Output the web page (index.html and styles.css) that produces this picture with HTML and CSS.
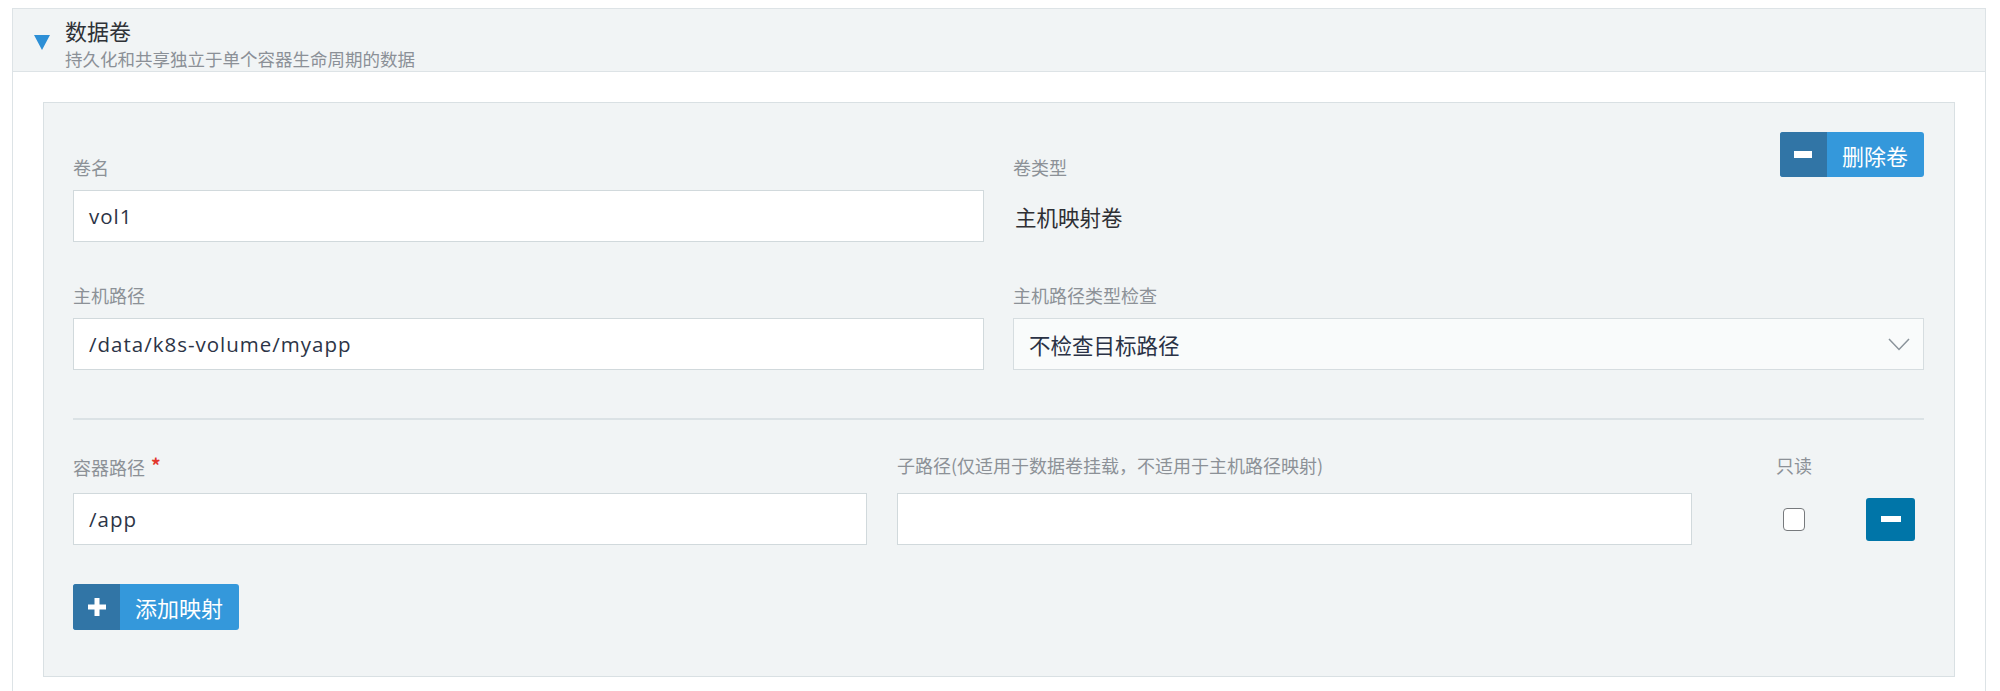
FILE: index.html
```html
<!DOCTYPE html>
<html lang="zh-CN">
<head>
<meta charset="utf-8">
<title>数据卷</title>
<link rel="stylesheet" href="styles.css">
</head>
<body>
<section class="section">
  <header class="section-head">
    <span class="caret"></span>
    <div class="head-text">
      <div class="head-title">数据卷</div>
      <div class="head-sub">持久化和共享独立于单个容器生命周期的数据</div>
    </div>
  </header>
  <div class="section-body">
    <div class="volume-box">
      <div class="grid-two">
        <label class="lbl lbl-end">卷名</label>
        <div class="lbl-row">
          <label class="lbl">卷类型</label>
          <button class="btn btn-remove" type="button">
            <span class="btn-icon"><span class="icon-minus"></span></span>
            <span class="btn-text">删除卷</span>
          </button>
        </div>
        <div class="input"><span class="val">vol1</span></div>
        <div class="static">主机映射卷</div>
        <label class="lbl lbl-gap">主机路径</label>
        <label class="lbl lbl-gap">主机路径类型检查</label>
        <div class="input"><span class="val">/data/k8s-volume/myapp</span></div>
        <div class="select">
          <span class="sel-text">不检查目标路径</span>
          <svg class="chev" width="22" height="13" viewBox="0 0 22 13"><path d="M1 1 L11 11.5 L21 1" fill="none" stroke="#8a939a" stroke-width="1.5"/></svg>
        </div>
      </div>
      <hr class="divider">
      <div class="grid-map">
        <label class="lbl">容器路径 <span class="req">*</span></label>
        <label class="lbl">子路径(仅适用于数据卷挂载，不适用于主机路径映射)</label>
        <label class="lbl lbl-center">只读</label>
        <span></span>
        <div class="input"><span class="val">/app</span></div>
        <div class="input"></div>
        <div class="check-cell"><input class="check" type="checkbox"></div>
        <div class="rm-cell">
          <button class="btn-mini" type="button"><span class="mini-minus"></span></button>
        </div>
      </div>
      <div class="add-row">
        <button class="btn btn-add" type="button">
          <span class="btn-icon">
            <svg width="18" height="18" viewBox="0 0 18 18"><rect x="6.5" y="0" width="5" height="18" fill="#fff"/><rect x="0" y="6.5" width="18" height="5" fill="#fff"/></svg>
          </span>
          <span class="btn-text">添加映射</span>
        </button>
      </div>
    </div>
  </div>
</section>
</body>
</html>
```

FILE: styles.css
```css
html, body {
  margin: 0;
  padding: 0;
  background: #ffffff;
}

body {
  font-family: "Noto Sans CJK SC", "Noto Sans", sans-serif;
  color: #333;
  padding-top: 8px;
}

.section {
  margin: 0 14px 0 12px;
  border: 1px solid #dde3e6;
  border-bottom: none;
  padding-bottom: 40px;
}

.section-head {
  display: flex;
  align-items: flex-start;
  height: 63px;
  box-sizing: border-box;
  padding: 8px 0 0 21px;
  background: #f1f4f5;
  border-bottom: 1px solid #dde3e6;
}

.caret {
  width: 0;
  height: 0;
  margin-top: 18px;
  border-left: 8px solid transparent;
  border-right: 8px solid transparent;
  border-top: 15px solid #2d8fd6;
}

.head-text {
  margin-left: 15px;
  display: flex;
  flex-direction: column;
}

.head-title {
  font-size: 22px;
  line-height: 26px;
  color: #2f3237;
}

.head-sub {
  margin-top: 5px;
  font-size: 17.5px;
  line-height: 22px;
  color: #8b9097;
}

.section-body {
  padding: 30px 30px 0 30px;
}

.volume-box {
  background: #f1f4f5;
  border: 1px solid #d9e0e3;
  padding: 29px 30px 46px 29px;
}

.grid-two {
  display: grid;
  grid-template-columns: 1fr 1fr;
  column-gap: 29px;
  row-gap: 11px;
}

.lbl {
  display: block;
  font-size: 18px;
  line-height: 24px;
  color: #8c9197;
}

.lbl-end {
  align-self: end;
}

.lbl-gap {
  margin-top: 30px;
}

.lbl-row {
  display: flex;
  justify-content: space-between;
  align-items: flex-end;
}

.lbl-row .btn {
  margin-bottom: 2px;
}

.input {
  height: 52px;
  box-sizing: border-box;
  background: #ffffff;
  border: 1px solid #d1d9dc;
  display: flex;
  align-items: center;
  padding-left: 15px;
}

.val {
  font-family: "Open Sans", "Noto Sans CJK SC", sans-serif;
  font-size: 20.5px;
  letter-spacing: 1px;
  color: #2c3446;
}

.static {
  height: 52px;
  display: flex;
  align-items: center;
  padding-left: 2px;
  font-size: 21.5px;
  color: #2e2f33;
}

.select {
  height: 52px;
  box-sizing: border-box;
  background: #f9fbfb;
  border: 1px solid #d6dde0;
  display: flex;
  align-items: center;
  justify-content: space-between;
  padding: 0 13px 0 15px;
}

.sel-text {
  font-size: 21.5px;
  color: #2a3245;
}

.chev {
  display: block;
}

.divider {
  margin: 48px 0 33px 0;
  height: 2px;
  border: none;
  background: #dbe2e5;
}

.grid-map {
  display: grid;
  grid-template-columns: 794px 795px 1fr 58px;
  column-gap: 30px;
  row-gap: 14px;
}

.req {
  margin-left: 2px;
  color: #e2372c;
  font-size: 19px;
  font-weight: bold;
  vertical-align: 2px;
}

.lbl-center {
  justify-self: end;
  width: 84px;
  text-align: center;
}

.check-cell {
  justify-self: end;
  width: 84px;
  display: flex;
  align-items: center;
  justify-content: center;
}

.check {
  -webkit-appearance: none;
  appearance: none;
  margin: 0;
  width: 22px;
  height: 23px;
  box-sizing: border-box;
  border: 1.5px solid #777a7d;
  border-radius: 4px;
  background: #ffffff;
}

.rm-cell {
  display: flex;
  align-items: center;
}

.btn-mini {
  width: 49px;
  height: 43px;
  padding: 0;
  border: none;
  border-radius: 3px;
  background: #0075a8;
  display: flex;
  align-items: center;
  justify-content: center;
}

.mini-minus {
  width: 20px;
  height: 6px;
  background: #ffffff;
}

.add-row {
  margin-top: 39px;
  display: flex;
}

.btn {
  display: inline-flex;
  align-items: stretch;
  height: 45px;
  padding: 0;
  border: none;
  border-radius: 3px;
  overflow: hidden;
  background: #3498db;
  color: #ffffff;
  font-family: "Noto Sans CJK SC", sans-serif;
  font-size: 22px;
}

.btn-add {
  height: 46px;
}

.btn-icon {
  width: 47px;
  background: #3175a6;
  display: flex;
  align-items: center;
  justify-content: center;
}

.icon-minus {
  width: 18px;
  height: 7px;
  background: #ffffff;
}

.btn-text {
  display: flex;
  align-items: center;
  padding: 0 16px 0 15px;
  line-height: 1;
}
```
